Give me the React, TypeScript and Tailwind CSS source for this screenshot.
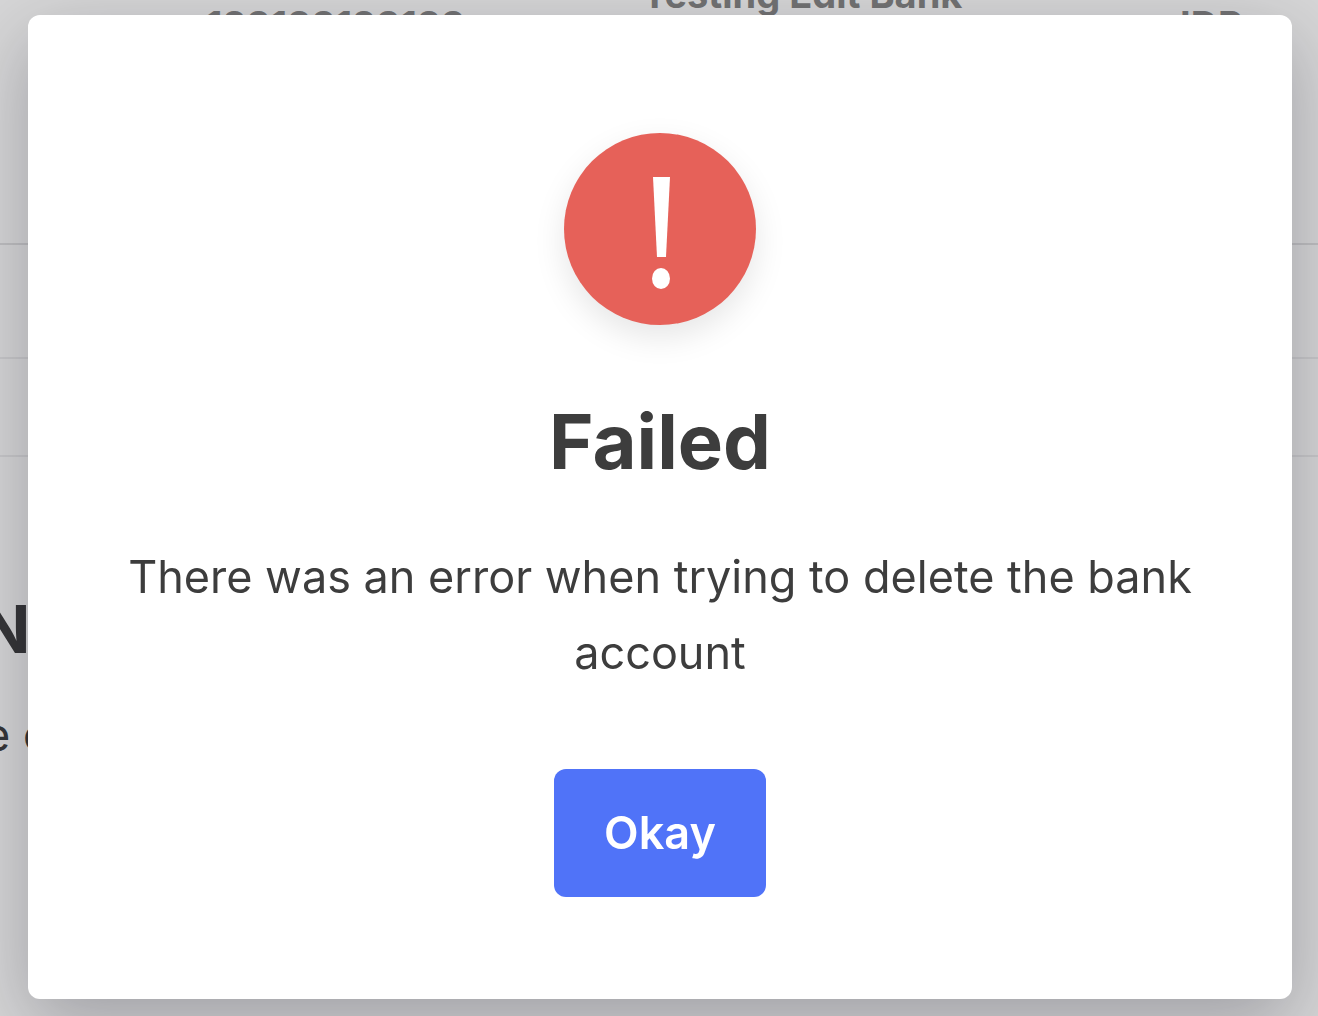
function BankAccounts() {
  return (
    <div className="h-screen overflow-hidden bg-[#d6d6d7]">
      {/* Accounts table */}
      <table className="-mt-[26px] w-full table-fixed text-left text-[38px] leading-[40px] font-bold text-[#727273]">
        <tbody>
          <tr className="h-[270px] border-b-2 border-[#bfbfc1] align-top">
            <td className="w-[642px] pt-[31px] pl-[206px]">123123123123</td>
            <td className="w-[530px] whitespace-nowrap">Testing Edit Bank</td>
            <td className="pt-[31px] pl-2">IDR</td>
          </tr>
          <tr className="h-[114px] border-b-2 border-[#c8c8ca]">
            <td colSpan={3}></td>
          </tr>
          <tr className="h-[98px] border-b-2 border-[#c8c8ca]">
            <td colSpan={3}></td>
          </tr>
        </tbody>
      </table>

      {/* Notes */}
      <div className="-ml-5 pt-[132px] text-[#363638]">
        <h2 className="text-[66px] leading-[80px] font-bold">N</h2>
        <p className="mt-7 pl-1 text-[45px] leading-[76px]">e c</p>
      </div>
    </div>
  );
}

function FailedDialog() {
  return (
    <div className="fixed inset-0 flex flex-col pt-[15px] pr-[26px] pb-[17px] pl-[28px]">
      <div
        role="alertdialog"
        aria-labelledby="dialog-title"
        aria-describedby="dialog-text"
        className="flex w-full flex-col items-center rounded-xl bg-white px-24 pt-[118px] pb-[102px] text-center text-[#3d3d3d] shadow-[0_24px_76px_rgba(0,0,20,0.26)]"
      >
        <div className="flex size-48 items-center justify-center rounded-full bg-[#e66159] shadow-[0_12px_32px_rgba(0,0,0,0.1)]">
          <svg className="size-48" viewBox="0 0 192 192" fill="white" aria-hidden="true">
            <path d="M89 44h17l-4 80h-9z" />
            <ellipse cx="97" cy="145.500" rx="9" ry="10.500" />
          </svg>
        </div>
        <h1 id="dialog-title" className="mt-[68px] text-[76px] leading-[96px] font-bold">
          Failed
        </h1>
        <p id="dialog-text" className="mt-[50px] text-[45px] leading-[76px]">
          There was an error when trying to delete the bank account
        </p>
        <button
          type="button"
          className="mt-[78px] h-32 rounded-xl bg-[#5073f8] px-[50px] text-[45px] leading-[76px] font-semibold text-white"
        >
          Okay
        </button>
      </div>
    </div>
  );
}

export default function App() {
  return (
    <div className="font-['Inter','Liberation_Sans',sans-serif]">
      <BankAccounts />
      <FailedDialog />
    </div>
  );
}
